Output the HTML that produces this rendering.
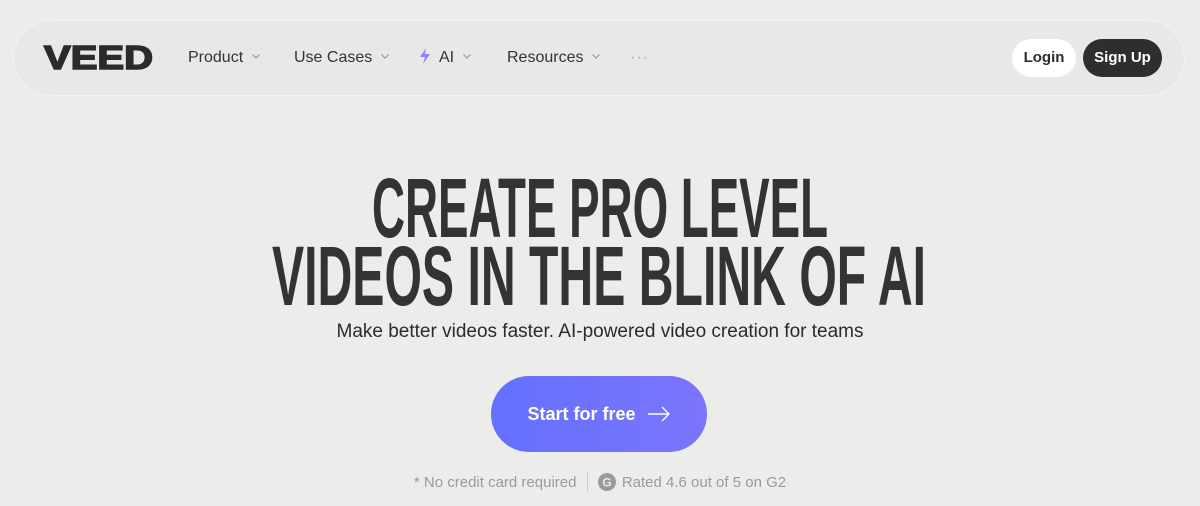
<!DOCTYPE html>
<html><head><meta charset="utf-8"><style>
*{margin:0;padding:0;box-sizing:border-box}
body{width:1200px;height:506px;background:#ececeb;font-family:"Liberation Sans",sans-serif;color:#2b2b2b;position:relative;overflow:hidden}
.nav{position:absolute;left:13px;top:20px;width:1172px;height:76px;border-radius:38px;background:#e8e8e7;border:1px solid #f2f2f1}
.item{position:absolute;top:48px;font-size:16px;color:#333;line-height:20px}
.chev{display:inline-block;width:10px;height:10px;margin-left:8px;vertical-align:1px}
.btn{position:absolute;top:39px;height:38px;border-radius:19px;font-weight:bold;font-size:15px;line-height:38px;text-align:center}
.sub{position:absolute;top:321px;left:0;width:1200px;text-align:center;font-size:19px;color:#2b2b2b}
.cta{position:absolute;left:491px;top:376px;width:216px;height:76px;border-radius:38px;background:linear-gradient(90deg,#6470fe,#7b75fb);color:#fff;font-weight:bold;font-size:18px;line-height:76px;text-align:center}
.fine{position:absolute;top:472px;left:0;width:1200px;text-align:center;font-size:15px;color:#9a9a9a}
</style></head><body>
<div class="nav"></div>
<svg style="position:absolute;left:0;top:30px" width="200" height="50"><text x="44" y="39" textLength="109" lengthAdjust="spacingAndGlyphs" font-family="Liberation Sans" font-weight="bold" font-size="33" fill="#2b2b2b" stroke="#2b2b2b" stroke-width="1.6">VEED</text></svg>
<div class="item" style="left:188px">Product<svg class="chev" viewBox="0 0 10 10"><path d="M1.5 3.5L5 7L8.5 3.5" fill="none" stroke="#999" stroke-width="1.2"/></svg></div>
<div class="item" style="left:294px">Use Cases<svg class="chev" viewBox="0 0 10 10"><path d="M1.5 3.5L5 7L8.5 3.5" fill="none" stroke="#999" stroke-width="1.2"/></svg></div>
<div class="item" style="left:419px"><svg width="12" height="16" viewBox="0 0 12 16" style="vertical-align:-2px;margin-right:8px"><path d="M7 0L1 9H6L4 16L11 6H6Z" fill="#9b7cf8"/></svg>AI<svg class="chev" viewBox="0 0 10 10"><path d="M1.5 3.5L5 7L8.5 3.5" fill="none" stroke="#999" stroke-width="1.2"/></svg></div>
<div class="item" style="left:507px">Resources<svg class="chev" viewBox="0 0 10 10"><path d="M1.5 3.5L5 7L8.5 3.5" fill="none" stroke="#999" stroke-width="1.2"/></svg></div>
<div class="item" style="left:630px;color:#aaa;letter-spacing:1px">···</div>
<div class="btn" style="left:1012px;width:64px;background:#fff;color:#2b2b2b">Login</div>
<div class="btn" style="left:1083px;width:79px;background:#2e2e2e;color:#fff">Sign Up</div>
<svg style="position:absolute;left:0;top:160px" width="1200" height="160">
<text x="372" y="77" textLength="456" lengthAdjust="spacingAndGlyphs" font-family="Liberation Sans" font-weight="bold" font-size="84" fill="#333">CREATE PRO LEVEL</text>
<text x="272" y="145" textLength="654" lengthAdjust="spacingAndGlyphs" font-family="Liberation Sans" font-weight="bold" font-size="84" fill="#333">VIDEOS IN THE BLINK OF AI</text>
</svg>
<div class="sub">Make better videos faster. AI-powered video creation for teams</div>
<div class="cta">Start for free <svg width="24" height="16" viewBox="0 0 24 16" style="vertical-align:-2px;margin-left:6px"><path d="M1 8H22M15 1L22 8L15 15" fill="none" stroke="#fff" stroke-width="1.4"/></svg></div>
<div class="fine">* No credit card required <span style="display:inline-block;width:1px;height:20px;background:#ccc;vertical-align:-5px;margin:0 6px"></span> <svg width="18" height="18" viewBox="0 0 18 18" style="vertical-align:-4px;margin-right:6px"><circle cx="9" cy="9" r="9" fill="#9a9a9a"/><text x="9" y="13.5" text-anchor="middle" font-size="12" font-weight="bold" fill="#ececeb" font-family="Liberation Sans">G</text></svg>Rated 4.6 out of 5 on G2</div>
</body></html>
